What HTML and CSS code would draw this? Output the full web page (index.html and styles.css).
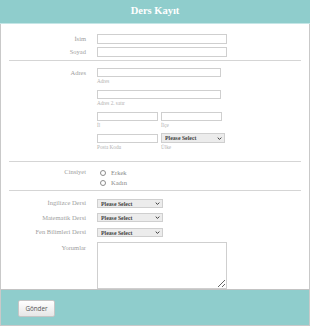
FILE: index.html
```html
<!DOCTYPE html>
<html lang="tr">
<head>
<meta charset="utf-8">
<title>Ders Kayıt</title>
<link rel="stylesheet" href="styles.css">
</head>
<body>
<div class="form">
  <div class="header"><h1 class="title">Ders Kayıt</h1></div>
  <div class="body">
    <div class="row">
      <label class="lbl">İsim</label>
      <input class="inp wide" type="text">
    </div>
    <div class="row gap3">
      <label class="lbl">Soyad</label>
      <input class="inp wide" type="text">
    </div>
    <div class="divider d1"></div>
    <div class="row top addr-row">
      <label class="lbl addr-lbl">Adres</label>
      <div class="addr">
        <div class="field">
          <input class="inp full" type="text">
          <span class="sub">Adres</span>
        </div>
        <div class="field">
          <input class="inp full" type="text">
          <span class="sub">Adres 2. satır</span>
        </div>
        <div class="pair">
          <div class="field half">
            <input class="inp" type="text">
            <span class="sub">İl</span>
          </div>
          <div class="field half">
            <input class="inp" type="text">
            <span class="sub">İlçe</span>
          </div>
        </div>
        <div class="pair">
          <div class="field half">
            <input class="inp" type="text">
            <span class="sub">Posta Kodu</span>
          </div>
          <div class="field country">
            <div class="sel-wrap sel-country">
              <select class="sel"><option>Please Select</option></select>
              <svg class="chev" viewBox="0 0 8 5" width="5" height="3"><path d="M1 1 L4 4 L7 1" fill="none" stroke="#333" stroke-width="1.6"/></svg>
            </div>
            <span class="sub">Ülke</span>
          </div>
        </div>
      </div>
    </div>
    <div class="divider d2"></div>
    <div class="row top radio-row">
      <label class="lbl radio-lbl">Cinsiyet</label>
      <div class="radios">
        <div class="radio"><span class="circle"></span><span class="rtext">Erkek</span></div>
        <div class="radio"><span class="circle"></span><span class="rtext">Kadın</span></div>
      </div>
    </div>
    <div class="divider d3"></div>
    <div class="row course first">
      <label class="lbl">İngilizce Dersi</label>
      <div class="sel-wrap sel-course">
        <select class="sel"><option>Please Select</option></select>
        <svg class="chev" viewBox="0 0 8 5" width="5" height="3"><path d="M1 1 L4 4 L7 1" fill="none" stroke="#333" stroke-width="1.6"/></svg>
      </div>
    </div>
    <div class="row course">
      <label class="lbl">Matematik Dersi</label>
      <div class="sel-wrap sel-course">
        <select class="sel"><option>Please Select</option></select>
        <svg class="chev" viewBox="0 0 8 5" width="5" height="3"><path d="M1 1 L4 4 L7 1" fill="none" stroke="#333" stroke-width="1.6"/></svg>
      </div>
    </div>
    <div class="row course">
      <label class="lbl">Fen Bilimleri Dersi</label>
      <div class="sel-wrap sel-course">
        <select class="sel"><option>Please Select</option></select>
        <svg class="chev" viewBox="0 0 8 5" width="5" height="3"><path d="M1 1 L4 4 L7 1" fill="none" stroke="#333" stroke-width="1.6"/></svg>
      </div>
    </div>
    <div class="row top comments">
      <label class="lbl com-lbl">Yorumlar</label>
      <textarea class="ta"></textarea>
    </div>
  </div>
  <div class="footer">
    <button class="btn" type="button">Gönder</button>
  </div>
</div>
</body>
</html>
```
FILE: styles.css
```css
* { box-sizing: border-box; }
html, body { margin: 0; padding: 0; background: #fff; }
body { font-family: "Liberation Serif", "Times New Roman", serif; }

.form {
  width: 310px;
  height: 326px;
  border: 1px solid #c9c9c9;
  border-top: none;
  display: flex;
  flex-direction: column;
}

.header {
  height: 24px;
  background: #8fcdcc;
  border-bottom: 1px solid #c4e6e6;
  display: flex;
  align-items: center;
  justify-content: center;
  margin: 0 -1px;
}
.title {
  margin: 0;
  font-size: 10.5px;
  font-weight: bold;
  color: #fff;
  line-height: 1;
  padding-bottom: 1px;
}

.body {
  flex: 1;
  padding-top: 10px;
  display: flex;
  flex-direction: column;
}

.row {
  display: flex;
  align-items: center;
}
.row.top { align-items: flex-start; }
.gap3 { margin-top: 3px; }

.lbl {
  width: 85px;
  flex: none;
  margin-right: 11px;
  text-align: right;
  font-size: 6.5px;
  color: #a0a0a0;
  line-height: 10px;
  font-family: "Liberation Serif", "Times New Roman", serif;
}

.inp {
  height: 10px;
  border: 1px solid #cfcfcf;
  background: #fff;
  padding: 0;
  margin: 0;
  display: block;
}
.wide { width: 130px; }

.divider {
  height: 1px;
  background: #d5d5d5;
  margin: 0 8px;
}
.d1 { margin-top: 3px; }
.d2 { margin-top: 11px; }
.d3 { margin-top: 3px; }

.addr-row { margin-top: 7px; }
.addr-lbl { line-height: 9px; }
.addr {
  display: flex;
  flex-direction: column;
  gap: 6px;
  width: 128px;
}
.field { display: flex; flex-direction: column; }
.field .inp { height: 9px; }
.full { width: 124px; }
.pair { display: flex; gap: 3px; }
.half { width: 61px; }
.half .inp { width: 61px; }
.sub {
  font-size: 5.2px;
  color: #b2b2b2;
  line-height: 7px;
  height: 7px;
  padding-top: 1px;
}

.sel-wrap { position: relative; }
.sel {
  -webkit-appearance: none;
  appearance: none;
  display: block;
  margin: 0;
  border: 1px solid #cfcfcf;
  border-radius: 0;
  background: #ececec;
  font-family: "Liberation Serif", "Times New Roman", serif;
  font-size: 5.8px;
  font-weight: bold;
  color: #444;
  padding: 0 0 0 3px;
  line-height: 8px;
}
.chev {
  position: absolute;
  right: 3px;
  top: 50%;
  margin-top: -1.5px;
}
.sel-country .sel { width: 64px; height: 10px; }
.country { margin-top: -1px; }
.sel-course .sel { width: 66px; height: 9px; }

.radio-row { margin-top: 5px; }
.radios { display: flex; flex-direction: column; }
.radio {
  display: flex;
  align-items: center;
  height: 10px;
}
.rtext {
  font-family: "Liberation Serif", "Times New Roman", serif;
  font-size: 6.5px;
  color: #8a8a8a;
}
.circle {
  width: 6px;
  height: 6px;
  border: 1px solid #8c8c8c;
  border-radius: 50%;
  margin: 1px 5px 0 3px;
  background: #fff;
}

.course { margin-top: 4.5px; }
.course.first { margin-top: 7px; }

.comments { margin-top: 5px; }
.com-lbl { line-height: 10px; margin-top: 1px; }
.ta {
  width: 130px;
  height: 47px;
  border: 1px solid #cfcfcf;
  resize: both;
  margin: 0;
  padding: 0;
  display: block;
}

.footer {
  height: 36px;
  flex: none;
  background: #8fcdcc;
  border-top: 1px solid #c3c3c3;
  padding: 10px 0 0 17px;
}
.btn {
  width: 37px;
  height: 17px;
  padding: 0;
  font-family: "Open Sans", "Liberation Sans", sans-serif;
  font-size: 6.3px;
  color: #555;
  border: 1px solid #c6c6c6;
  border-radius: 2px;
  background: linear-gradient(#ffffff, #e6e6e6);
  display: block;
}
```
